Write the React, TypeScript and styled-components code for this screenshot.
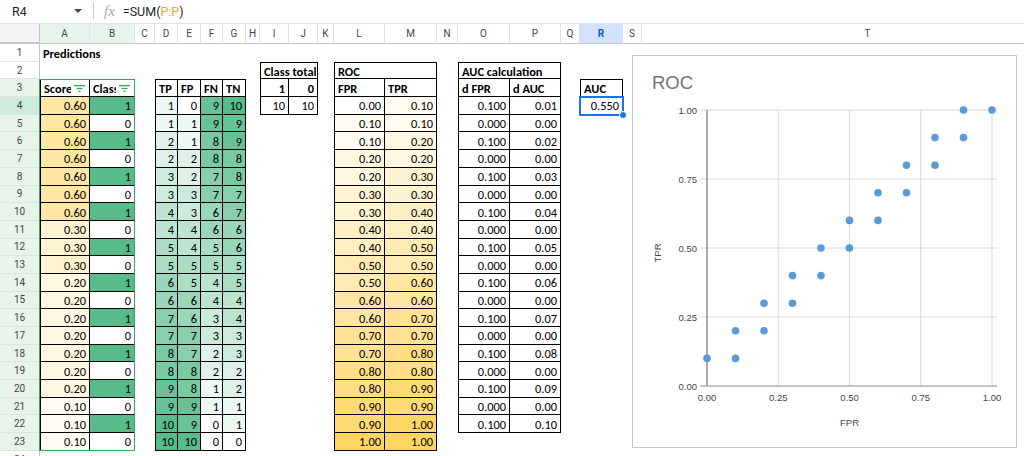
import React from 'react';
import styled, { createGlobalStyle } from 'styled-components';

const GlobalStyle = createGlobalStyle`
  html, body {
    margin: 0;
    padding: 0;
    background: #ffffff;
    overflow: hidden;
  }
`;

const LETTERS = 'ABCDEFGHIJKLMNOPQRST'.split('');
const WIDTHS = [50, 45, 20, 23, 23, 22, 23, 14, 29, 29, 16, 51, 52, 21, 52, 51, 19, 43, 19, 452];
const ROW_COUNT = 24;
const SELECTED_COL = 'R';
const SELECTED_ROW = 4;
const FILTER_COLS = ['A', 'B'];

const colIndex = (c: string) => LETTERS.indexOf(c) + 2;

const mix = (hex: string, t: number) => {
  const n = parseInt(hex.slice(1), 16);
  const r = (n >> 16) & 255;
  const g = (n >> 8) & 255;
  const b = n & 255;
  const m = (c: number) => Math.round(255 + (c - 255) * t);
  return `rgb(${m(r)}, ${m(g)}, ${m(b)})`;
};

type CellSpec = {
  text?: React.ReactNode;
  bold?: boolean;
  align?: 'left' | 'right';
  bg?: string;
  span?: number;
  filter?: boolean;
};

const cells: Record<string, CellSpec> = {};
const set = (col: string, row: number, spec: CellSpec) => {
  cells[col + row] = spec;
};

// data
const scores = [0.6, 0.6, 0.6, 0.6, 0.6, 0.6, 0.6, 0.3, 0.3, 0.3, 0.2, 0.2, 0.2, 0.2, 0.2, 0.2, 0.2, 0.1, 0.1, 0.1];
const tp = scores.map((_, i) => Math.floor(i / 2) + 1);
const fp = scores.map((_, i) => Math.ceil(i / 2));
const fpr = fp.map((v) => v / 10);
const tpr = tp.map((v) => v / 10);

set('A', 1, { text: 'Predictions', bold: true });
set('A', 3, { text: 'Score', bold: true, filter: true });
set('B', 3, { text: 'Class', bold: true, filter: true });
['TP', 'FP', 'FN', 'TN'].forEach((t, i) => set(LETTERS[3 + i], 3, { text: t, bold: true }));
set('I', 2, { text: 'Class total', bold: true, span: 2 });
set('I', 3, { text: '1', bold: true, align: 'right' });
set('J', 3, { text: '0', bold: true, align: 'right' });
set('I', 4, { text: '10', align: 'right' });
set('J', 4, { text: '10', align: 'right' });
set('L', 2, { text: 'ROC', bold: true, span: 2 });
set('L', 3, { text: 'FPR', bold: true });
set('M', 3, { text: 'TPR', bold: true });
set('O', 2, { text: 'AUC calculation', bold: true, span: 2 });
set('O', 3, { text: 'd FPR', bold: true });
set('P', 3, { text: 'd AUC', bold: true });
set('R', 3, { text: 'AUC', bold: true });
set('R', 4, { text: '0.550', align: 'right' });

scores.forEach((s, i) => {
  const row = i + 4;
  const cls = i % 2 === 0 ? 1 : 0;
  set('A', row, { text: s.toFixed(2), align: 'right', bg: mix('#ffd666', s) });
  set('B', row, { text: String(cls), align: 'right', bg: cls ? '#57bb8a' : '#ffffff' });
  const counts = [tp[i], fp[i], 10 - tp[i], 10 - fp[i]];
  counts.forEach((v, k) =>
    set(LETTERS[3 + k], row, { text: String(v), align: 'right', bg: mix('#57bb8a', v / 10) })
  );
  set('L', row, { text: fpr[i].toFixed(2), align: 'right', bg: mix('#ffd666', fpr[i]) });
  set('M', row, { text: tpr[i].toFixed(2), align: 'right', bg: mix('#ffd666', tpr[i]) });
  if (i < 19) {
    const d = fpr[i + 1] - fpr[i];
    set('O', row, { text: d.toFixed(3), align: 'right' });
    set('P', row, { text: (d * tpr[i + 1]).toFixed(2), align: 'right' });
  }
});

const tables = [
  { c0: 'A', c1: 'B', r0: 3, r1: 23 },
  { c0: 'D', c1: 'G', r0: 3, r1: 23 },
  { c0: 'I', c1: 'J', r0: 2, r1: 4 },
  { c0: 'L', c1: 'M', r0: 2, r1: 23 },
  { c0: 'O', c1: 'P', r0: 2, r1: 22 },
  { c0: 'R', c1: 'R', r0: 3, r1: 4 },
];

const tableOf = (col: string, row: number) =>
  tables.find(
    (t) => colIndex(col) >= colIndex(t.c0) && colIndex(col) <= colIndex(t.c1) && row >= t.r0 && row <= t.r1
  );

const points = fpr.map((x, i) => [x, tpr[i]]);

const App: React.FC = () => {
  const rendered: React.ReactNode[] = [];
  for (let r = 1; r <= ROW_COUNT; r++) {
    let skip = 0;
    LETTERS.forEach((c) => {
      if (skip > 0) {
        skip--;
        return;
      }
      const spec = cells[c + r];
      const table = tableOf(c, r);
      if (!spec && !table) return;
      const span = spec?.span ?? 1;
      skip = span - 1;
      rendered.push(
        <Cell
          key={c + r}
          $col={colIndex(c)}
          $row={r + 1}
          $span={span}
          $bg={spec?.bg}
          $bold={spec?.bold}
          $align={spec?.align ?? 'left'}
          $boxed={!!table}
          $top={!!table && table.r0 === r}
          $left={!!table && table.c0 === c}
        >
          <CellText $clip={!!spec?.filter}>{spec?.text}</CellText>
          {spec?.filter && <FilterIcon />}
        </Cell>
      );
    });
  }

  return (
    <>
      <GlobalStyle />
      <Page>
        <FormulaBar>
          <NameBox>
            R4
            <Caret />
          </NameBox>
          <Divider />
          <FxIcon>fx</FxIcon>
          <Formula>
            =SUM(<RangeRef>P:P</RangeRef>)
          </Formula>
        </FormulaBar>

        <Sheet>
          <Corner />
          {LETTERS.map((c) => (
            <ColHeader
              key={c}
              $col={colIndex(c)}
              $selected={c === SELECTED_COL}
              $filtered={FILTER_COLS.includes(c)}
            >
              {c}
            </ColHeader>
          ))}
          {Array.from({ length: ROW_COUNT }, (_, i) => i + 1).map((r) => (
            <RowHeader
              key={r}
              $row={r + 1}
              $selected={r === SELECTED_ROW}
              $filtered={r >= 3 && r <= 23}
            >
              {r}
            </RowHeader>
          ))}

          {rendered}

          <FilterOutline />
          <Selection>
            <FillHandle />
          </Selection>

          <ChartBox>
            <RocChart />
          </ChartBox>
        </Sheet>
      </Page>
    </>
  );
};

const RocChart: React.FC = () => {
  const x0 = 74;
  const x1 = 359;
  const yTop = 54;
  const yBot = 330;
  const toX = (v: number) => x0 + v * (x1 - x0);
  const toY = (v: number) => yBot - v * (yBot - yTop);
  const ticks = [0, 0.25, 0.5, 0.75, 1];
  return (
    <svg width="383" height="391" viewBox="0 0 383 391">
      <text x="19" y="33" fontSize="18.5" fill="#757575" fontFamily="'Liberation Sans', Arial, sans-serif">
        ROC
      </text>
      {ticks.slice(1).map((t) => (
        <g key={t}>
          <line x1={x0 - 7} x2={x1 + 5} y1={toY(t)} y2={toY(t)} stroke="#d9d9d9" strokeWidth="1" />
          <line x1={toX(t)} x2={toX(t)} y1={yTop} y2={yBot} stroke="#d9d9d9" strokeWidth="1" />
        </g>
      ))}
      <line x1={x0} x2={x0} y1={yTop} y2={yBot} stroke="#595959" strokeWidth="1" />
      <line x1={x0 - 7} x2={x1 + 5} y1={yBot} y2={yBot} stroke="#8c8c8c" strokeWidth="1.2" />
      {ticks.map((t) => (
        <g key={'l' + t} fontSize="9.5" fill="#444" fontFamily="'Liberation Sans', Arial, sans-serif">
          <text x={x0 - 10} y={toY(t) + 3.5} textAnchor="end">
            {t.toFixed(2)}
          </text>
          <text x={toX(t)} y={yBot + 15} textAnchor="middle">
            {t.toFixed(2)}
          </text>
        </g>
      ))}
      <text
        x={x0 + (x1 - x0) / 2}
        y={370}
        textAnchor="middle"
        fontSize="9.5"
        fill="#444"
        fontFamily="'Liberation Sans', Arial, sans-serif"
      >
        FPR
      </text>
      <text
        x={28}
        y={197}
        textAnchor="middle"
        fontSize="9.5"
        fill="#444"
        fontFamily="'Liberation Sans', Arial, sans-serif"
        transform="rotate(-90 28 197)"
      >
        TPR
      </text>
      {points.map(([x, y], i) => (
        <circle key={i} cx={toX(x)} cy={toY(y)} r="3.8" fill="#5b9bd5" />
      ))}
    </svg>
  );
};

const FilterIcon: React.FC = () => (
  <FilterSvg width="11" height="7" viewBox="0 0 11 7">
    <rect x="0" y="0" width="11" height="1.3" fill="#34a853" />
    <rect x="2.5" y="2.8" width="6" height="1.3" fill="#34a853" />
    <rect x="4.5" y="5.6" width="2" height="1.3" fill="#34a853" />
  </FilterSvg>
);

const Page = styled.div`
  width: 1024px;
  height: 456px;
  overflow: hidden;
  background: #ffffff;
  font-family: Roboto, 'Liberation Sans', Arial, sans-serif;
`;

const FormulaBar = styled.div`
  display: flex;
  align-items: center;
  height: 23.5px;
  box-sizing: border-box;
  border-bottom: 1px solid #e1e3e1;
`;

const NameBox = styled.div`
  display: flex;
  align-items: center;
  justify-content: space-between;
  width: 93px;
  box-sizing: border-box;
  padding: 0 11px 0 12px;
  font-size: 12.5px;
  color: #1f1f1f;
`;

const Caret = styled.span`
  width: 0;
  height: 0;
  border-left: 4px solid transparent;
  border-right: 4px solid transparent;
  border-top: 4px solid #444746;
`;

const Divider = styled.div`
  width: 1px;
  height: 16px;
  background: #c4c7c5;
`;

const FxIcon = styled.span`
  margin-left: 10px;
  font-family: 'Liberation Serif', 'DejaVu Serif', serif;
  font-style: italic;
  font-size: 15px;
  color: #a8a8a8;
`;

const Formula = styled.span`
  margin-left: 8px;
  font-size: 12.5px;
  color: #1f1f1f;
`;

const RangeRef = styled.span`
  color: #e8a33a;
`;

const Sheet = styled.div`
  position: relative;
  display: grid;
  grid-template-columns: 40px ${WIDTHS.map((w) => `${w}px`).join(' ')};
  grid-template-rows: 20.5px repeat(${ROW_COUNT}, 17.7px);
  width: max-content;
`;

const Corner = styled.div`
  grid-column: 1;
  grid-row: 1;
  background: #f1f3f4;
  border-right: 1px solid #c4c7c5;
  border-bottom: 2px solid #c4c7c5;
`;

const ColHeader = styled.div<{ $col: number; $selected: boolean; $filtered: boolean }>`
  grid-column: ${(p) => p.$col};
  grid-row: 1;
  display: flex;
  align-items: center;
  justify-content: center;
  font-size: 10px;
  color: ${(p) => (p.$selected ? '#0b57d0' : '#444746')};
  font-weight: ${(p) => (p.$selected ? 700 : 400)};
  background: ${(p) => (p.$selected ? '#d3e3fd' : p.$filtered ? '#e6f4ea' : '#ffffff')};
  border-right: 1px solid #e1e3e1;
  border-bottom: 1px solid #c4c7c5;
`;

const RowHeader = styled.div<{ $row: number; $selected: boolean; $filtered: boolean }>`
  grid-column: 1;
  grid-row: ${(p) => p.$row};
  display: flex;
  align-items: center;
  justify-content: center;
  font-size: 10px;
  color: #444746;
  background: ${(p) => (p.$selected ? '#cdeada' : p.$filtered ? '#e6f4ea' : '#ffffff')};
  border-right: 1px solid #c4c7c5;
  border-bottom: 1px solid #e1e3e1;
`;

const Cell = styled.div<{
  $col: number;
  $row: number;
  $span: number;
  $bg?: string;
  $bold?: boolean;
  $align: 'left' | 'right';
  $boxed: boolean;
  $top: boolean;
  $left: boolean;
}>`
  grid-column: ${(p) => p.$col} / span ${(p) => p.$span};
  grid-row: ${(p) => p.$row};
  display: flex;
  align-items: center;
  justify-content: ${(p) => (p.$align === 'right' ? 'flex-end' : 'flex-start')};
  gap: 3px;
  padding: 1px 3px 0 3px;
  min-width: 0;
  box-sizing: border-box;
  background: ${(p) => p.$bg ?? 'transparent'};
  font-family: Carlito, Calibri, Lato, sans-serif;
  font-size: 12.4px;
  font-weight: ${(p) => (p.$bold ? 700 : 400)};
  color: #000000;
  white-space: nowrap;
  border-right: ${(p) => (p.$boxed ? '1px solid #000' : 'none')};
  border-bottom: ${(p) => (p.$boxed ? '1px solid #000' : 'none')};
  border-top: ${(p) => (p.$top ? '1px solid #000' : 'none')};
  border-left: ${(p) => (p.$left ? '1px solid #000' : 'none')};
`;

const CellText = styled.span<{ $clip: boolean }>`
  min-width: 0;
  overflow: ${(p) => (p.$clip ? 'hidden' : 'visible')};
  flex: ${(p) => (p.$clip ? '1 1 auto' : '0 0 auto')};
`;

const FilterSvg = styled.svg`
  flex: none;
  margin-left: auto;
  margin-right: 1px;
`;

const FilterOutline = styled.div`
  grid-column: ${colIndex('A')} / ${colIndex('B') + 1};
  grid-row: 4 / 25;
  border: 1px solid #34a853;
  margin-left: -1px;
  pointer-events: none;
`;

const Selection = styled.div`
  position: relative;
  grid-column: ${colIndex(SELECTED_COL)};
  grid-row: ${SELECTED_ROW + 1};
  margin: -1px -1px -1px -1px;
  border: 2px solid #1a73e8;
  pointer-events: none;
`;

const FillHandle = styled.div`
  position: absolute;
  right: -5px;
  bottom: -5px;
  width: 6px;
  height: 6px;
  border-radius: 50%;
  background: #1a73e8;
  border: 1px solid #ffffff;
`;

const ChartBox = styled.div`
  position: absolute;
  left: 632px;
  top: 31.5px;
  width: 385px;
  height: 393px;
  box-sizing: border-box;
  background: #ffffff;
  border: 1px solid #c8c8c8;
`;

export default App;
